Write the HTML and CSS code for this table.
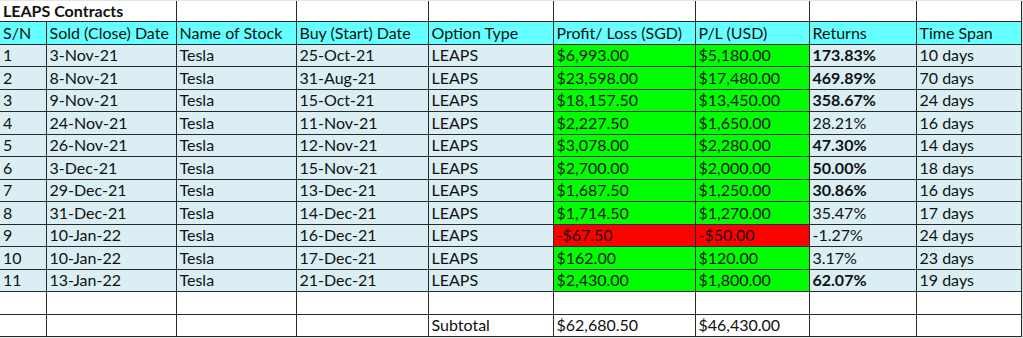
FILE: index.html
```html
<!DOCTYPE html>
<html>
<head>
<meta charset="utf-8">
<link rel="stylesheet" href="styles.css">
</head>
<body>
<table class="sheet">
  <colgroup>
    <col class="c1"><col class="c2"><col class="c3"><col class="c4"><col class="c5"><col class="c6"><col class="c7"><col class="c8"><col class="c9">
  </colgroup>
  <tr class="title">
    <td class="title-cell" colspan="2">LEAPS Contracts</td><td></td><td></td><td></td><td></td><td></td><td></td><td></td>
  </tr>
  <tr class="head">
    <td>S/N</td><td>Sold (Close) Date</td><td>Name of Stock</td><td>Buy (Start) Date</td><td>Option Type</td><td>Profit/ Loss (SGD)</td><td>P/L (USD)</td><td>Returns</td><td>Time Span</td>
  </tr>
  <tr class="row"><td>1</td><td>3-Nov-21</td><td>Tesla</td><td>25-Oct-21</td><td>LEAPS</td><td class="gain">$6,993.00</td><td class="gain">$5,180.00</td><td class="b">173.83%</td><td>10 days</td></tr>
  <tr class="row"><td>2</td><td>8-Nov-21</td><td>Tesla</td><td>31-Aug-21</td><td>LEAPS</td><td class="gain">$23,598.00</td><td class="gain">$17,480.00</td><td class="b">469.89%</td><td>70 days</td></tr>
  <tr class="row"><td>3</td><td>9-Nov-21</td><td>Tesla</td><td>15-Oct-21</td><td>LEAPS</td><td class="gain">$18,157.50</td><td class="gain">$13,450.00</td><td class="b">358.67%</td><td>24 days</td></tr>
  <tr class="row"><td>4</td><td>24-Nov-21</td><td>Tesla</td><td>11-Nov-21</td><td>LEAPS</td><td class="gain">$2,227.50</td><td class="gain">$1,650.00</td><td>28.21%</td><td>16 days</td></tr>
  <tr class="row"><td>5</td><td>26-Nov-21</td><td>Tesla</td><td>12-Nov-21</td><td>LEAPS</td><td class="gain">$3,078.00</td><td class="gain">$2,280.00</td><td class="b">47.30%</td><td>14 days</td></tr>
  <tr class="row"><td>6</td><td>3-Dec-21</td><td>Tesla</td><td>15-Nov-21</td><td>LEAPS</td><td class="gain">$2,700.00</td><td class="gain">$2,000.00</td><td class="b">50.00%</td><td>18 days</td></tr>
  <tr class="row"><td>7</td><td>29-Dec-21</td><td>Tesla</td><td>13-Dec-21</td><td>LEAPS</td><td class="gain">$1,687.50</td><td class="gain">$1,250.00</td><td class="b">30.86%</td><td>16 days</td></tr>
  <tr class="row"><td>8</td><td>31-Dec-21</td><td>Tesla</td><td>14-Dec-21</td><td>LEAPS</td><td class="gain">$1,714.50</td><td class="gain">$1,270.00</td><td>35.47%</td><td>17 days</td></tr>
  <tr class="row"><td>9</td><td>10-Jan-22</td><td>Tesla</td><td>16-Dec-21</td><td>LEAPS</td><td class="loss">-$67.50</td><td class="loss">-$50.00</td><td>-1.27%</td><td>24 days</td></tr>
  <tr class="row"><td>10</td><td>10-Jan-22</td><td>Tesla</td><td>17-Dec-21</td><td>LEAPS</td><td class="gain">$162.00</td><td class="gain">$120.00</td><td>3.17%</td><td>23 days</td></tr>
  <tr class="row"><td>11</td><td>13-Jan-22</td><td>Tesla</td><td>21-Dec-21</td><td>LEAPS</td><td class="gain">$2,430.00</td><td class="gain">$1,800.00</td><td class="b">62.07%</td><td>19 days</td></tr>
  <tr class="blank"><td></td><td></td><td></td><td></td><td></td><td></td><td></td><td></td><td></td></tr>
  <tr class="blank"><td></td><td></td><td></td><td></td><td>Subtotal</td><td>$62,680.50</td><td>$46,430.00</td><td></td><td></td></tr>
</table>
</body>
</html>
```
FILE: styles.css
```css
html, body {
  margin: 0;
  padding: 0;
  background: #e4e4e4;
}
body {
  padding-top: 1px;
}
.sheet {
  table-layout: fixed;
  border-collapse: collapse;
  width: 1021px;
  background: #ffffff;
  font-family: Lato, "Liberation Sans", sans-serif;
  font-size: 16px;
  color: #111111;
}
.c1 { width: 46px; }
.c2 { width: 130px; }
.c3 { width: 120px; }
.c4 { width: 132px; }
.c5 { width: 125px; }
.c6 { width: 142px; }
.c7 { width: 114px; }
.c8 { width: 107px; }
.c9 { width: 105px; }
.sheet td {
  border: 1px solid #2a2a2a;
  padding: 0 0 0 3px;
  height: 21.5px;
  line-height: 20px;
  white-space: nowrap;
  overflow: visible;
  vertical-align: middle;
}
.sheet td:first-child {
  border-left: none;
}
.title td {
  border-top: none;
  height: 20px;
}
.title-cell {
  font-weight: bold;
}
.head td {
  background: #66ffff;
}
.row td {
  background: #daeef3;
}
.row td.gain {
  background: #00ff00;
}
.row td.loss {
  background: #ff0000;
}
.b {
  font-weight: bold;
}
```
